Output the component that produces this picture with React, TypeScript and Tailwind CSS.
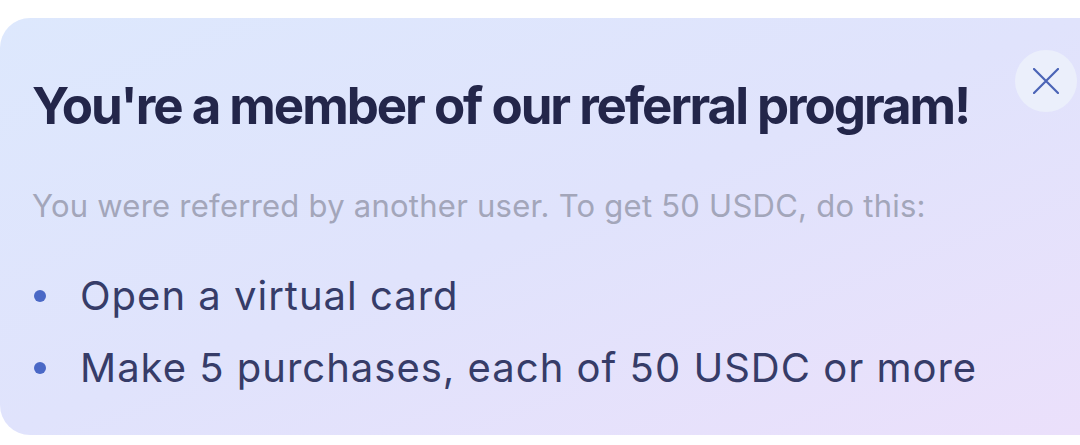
const steps = ['Open a virtual card', 'Make 5 purchases, each of 50 USDC or more'];

export default function App() {
  return (
    <div className="min-h-[445px] bg-white pt-[18px] font-['Inter',sans-serif]">
      <div className="relative h-[417px] rounded-l-[30px] bg-gradient-to-br from-[#dde8fd] via-[#e0e3fc] to-[#ebe0fb] pl-[32px] pt-[58px]">
        <button className="absolute right-[3px] top-[32px] flex h-[62px] w-[62px] items-center justify-center rounded-full bg-[#ebeffb]">
          <svg width="26" height="26" viewBox="0 0 26 26" fill="none" stroke="#4b63b6" strokeWidth="2.2" strokeLinecap="round">
            <path d="M1 1 25 25M25 1 1 25" />
          </svg>
        </button>

        <h1 className="text-[51px] leading-[60px] font-bold tracking-[-0.04em] text-[#23264a]">
          You're a member of our referral program!
        </h1>

        <p className="mt-[52px] text-[31px] leading-[36px] tracking-[0.008em] text-[#a3a6ba]">
          You were referred by another user. To get 50 USDC, do this:
        </p>

        <ul className="mt-[49px] flex flex-col gap-[26px]">
          {steps.map((step) => (
            <li key={step} className="flex items-center text-[40px] leading-[46px] tracking-[0.025em] text-[#363c68]">
              <span className="ml-[2px] mr-[34px] h-[12px] w-[12px] shrink-0 rounded-full bg-[#4a68c6]" />
              {step}
            </li>
          ))}
        </ul>
      </div>
    </div>
  );
}
